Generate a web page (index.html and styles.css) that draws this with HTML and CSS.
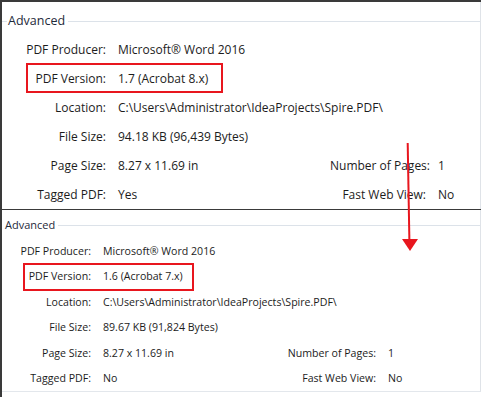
FILE: index.html
```html
<!DOCTYPE html>
<html lang="en">
<head>
  <meta charset="UTF-8">
  <title>PDF Properties - Advanced</title>
  <link rel="stylesheet" href="styles.css">
</head>
<body>
  <div class="screen">

    <div class="panel panel-top">
      <div class="group">
        <div class="group-head"><span class="tick"></span><span class="group-title">Advanced</span><span class="rule"></span></div>
        <div class="row">
          <span class="label">PDF Producer:</span><span class="value wide">Microsoft® Word 2016</span>
        </div>
        <div class="row marked">
          <span class="label">PDF Version:</span><span class="value wide">1.7 (Acrobat 8.x)</span>
        </div>
        <div class="row">
          <span class="label">Location:</span><span class="value wide">C:\Users\Administrator\IdeaProjects\Spire.PDF\</span>
        </div>
        <div class="row">
          <span class="label">File Size:</span><span class="value wide">94.18 KB (96,439 Bytes)</span>
        </div>
        <div class="row">
          <span class="label">Page Size:</span><span class="value">8.27 x 11.69 in</span>
          <span class="label">Number of Pages:</span><span class="value">1</span>
        </div>
        <div class="row">
          <span class="label">Tagged PDF:</span><span class="value">Yes</span>
          <span class="label">Fast Web View:</span><span class="value">No</span>
        </div>
      </div>
    </div>

    <div class="panel panel-bottom">
      <div class="group">
        <div class="group-head"><span class="group-title">Advanced</span><span class="rule"></span></div>
        <div class="row">
          <span class="label">PDF Producer:</span><span class="value wide">Microsoft® Word 2016</span>
        </div>
        <div class="row marked">
          <span class="label">PDF Version:</span><span class="value wide">1.6 (Acrobat 7.x)</span>
        </div>
        <div class="row">
          <span class="label">Location:</span><span class="value wide">C:\Users\Administrator\IdeaProjects\Spire.PDF\</span>
        </div>
        <div class="row">
          <span class="label">File Size:</span><span class="value wide">89.67 KB (91,824 Bytes)</span>
        </div>
        <div class="row">
          <span class="label">Page Size:</span><span class="value">8.27 x 11.69 in</span>
          <span class="label">Number of Pages:</span><span class="value">1</span>
        </div>
        <div class="row">
          <span class="label">Tagged PDF:</span><span class="value">No</span>
          <span class="label">Fast Web View:</span><span class="value">No</span>
        </div>
      </div>
    </div>

    <svg class="arrow" width="24" height="114" viewBox="396 140 24 114">
      <line x1="405.7" y1="143" x2="407.4" y2="241" stroke="#e8161e" stroke-width="2"/>
      <polygon points="400,239 416,239 408,251" fill="#e8161e"/>
    </svg>
  </div>
</body>
</html>
```

FILE: styles.css
```css
html, body { margin: 0; padding: 0; background: #fff; }
body { font-family: "Open Sans", "Noto Sans", Arial, sans-serif; color: #1c1c1c; }

.screen { position: relative; width: 479px; height: 397px; border-left: 2px solid #3a3a3a; }

.panel-top { border-top: 2px solid #3a3a3a; border-bottom: 1px solid #3a3a3a; height: 207px; }
.panel-bottom { height: 187px; }

.group { border-right: 1px solid #dfe3e8; height: 100%; box-sizing: border-box; }
.panel-bottom .group { border-bottom: 1px solid #e3e7ec; height: 182px; }

.group-head { display: flex; align-items: center; }
.group-title { color: #1e2a3a; }
.rule { flex: 1; height: 1px; background: #dce2e9; margin-left: 3px; }
.tick { width: 5px; height: 1px; background: #dce2e9; margin-right: 1px; }

.row { position: relative; display: grid; align-items: center; column-gap: 12px; white-space: nowrap; }
.label { text-align: right; }
.value.wide { grid-column: 2 / -1; }

/* top panel: the larger screenshot */
.panel-top { font-size: 12px; }
.panel-top .group-head { padding-top: 11px; height: 16px; line-height: 16px; font-size: 12.5px; }
.panel-top .group-head + .row { margin-top: 6px; }
.panel-top .row { grid-template-columns: 96px 200px 96px 1fr; height: 29px; padding-left: 8px; }

/* bottom panel: the smaller screenshot */
.panel-bottom { font-size: 10.6px; }
.panel-bottom .group-head { padding-top: 8px; height: 14px; line-height: 14px; font-size: 11px; }
.panel-bottom .group-title { margin-left: 3px; }
.panel-bottom .group-head + .row { margin-top: 6px; }
.panel-bottom .row { grid-template-columns: 84px 170px 91px 1fr; height: 25.5px; padding-left: 5px; }

/* red annotation boxes */
.marked::after { content: ""; position: absolute; border: 2px solid #e8161e; box-sizing: border-box; }
.panel-top .marked::after { left: 24px; top: -1px; width: 197px; height: 30px; }
.panel-bottom .marked::after { left: 21px; top: -1px; width: 171px; height: 28px; }

.arrow { position: absolute; left: 396px; top: 140px; }
```
